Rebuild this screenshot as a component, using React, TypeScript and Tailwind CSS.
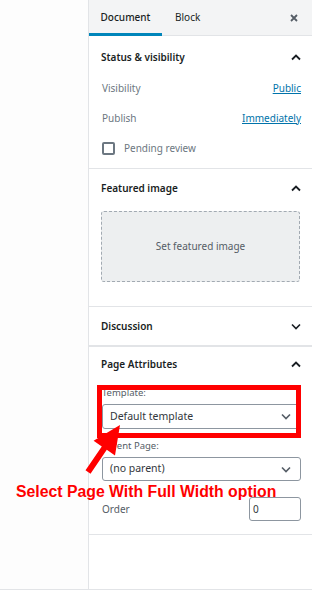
import { ReactNode } from 'react';

function ChevronUp() {
  return (
    <svg width="10" height="7" viewBox="0 0 10 7" className="text-[#191e23]">
      <path d="M1 5.5 L5 1.5 L9 5.5" fill="none" stroke="currentColor" strokeWidth="1.8" />
    </svg>
  );
}

function ChevronDown({ className = 'text-[#191e23]' }: { className?: string }) {
  return (
    <svg width="10" height="7" viewBox="0 0 10 7" className={className}>
      <path d="M1 1.5 L5 5.5 L9 1.5" fill="none" stroke="currentColor" strokeWidth="1.6" />
    </svg>
  );
}

function PanelHeader({ title, open = true, className = 'h-[38px]' }: { title: string; open?: boolean; className?: string }) {
  return (
    <div className={`flex items-center justify-between pl-[12px] pr-[11px] ${className}`}>
      <span className="text-[10px] font-semibold text-[#191e23]">{title}</span>
      {open ? <ChevronUp /> : <ChevronDown />}
    </div>
  );
}

function Select({ value, className }: { value: string; className: string }) {
  return (
    <div className={`flex items-center justify-between rounded-[3px] border border-[#8d96a0] pl-[7px] pr-[9px] ${className}`}>
      <span className="text-[10.5px] text-[#32373c]">{value}</span>
      <ChevronDown className="text-[#555d66]" />
    </div>
  );
}

function Row({ label, children }: { label: string; children: ReactNode }) {
  return (
    <div className="flex h-[20px] items-center justify-between">
      <span className="text-[10px] text-[#6c7781]">{label}</span>
      {children}
    </div>
  );
}

export default function App() {
  return (
    <div className="relative h-[598px] w-[312px] overflow-hidden bg-white font-['Noto_Sans',sans-serif]">
      <div className="flex h-[590px] border-b border-[#e2e4e7]">
        {/* editor canvas */}
        <div className="w-[89px] border-r border-[#e2e4e7] bg-[#fdfdfd]" />

        {/* sidebar */}
        <div className="relative flex flex-1 flex-col">
          <div className="flex h-[36px] items-center border-b border-[#e2e4e7] bg-[#f3f4f5]">
            <div className="relative flex h-full w-[73px] items-center justify-center">
              <span className="text-[10px] font-medium text-[#191e23]">Document</span>
              <div className="absolute bottom-[-1px] left-0 h-[3px] w-full bg-[#0085ba]" />
            </div>
            <span className="ml-[13px] text-[10px] text-[#191e23]">Block</span>
            <svg width="8" height="8" viewBox="0 0 8 8" className="ml-auto mr-[14px] text-[#555d66]">
              <path d="M1 1 L7 7 M7 1 L1 7" stroke="currentColor" strokeWidth="1.8" />
            </svg>
          </div>

          {/* Status & visibility */}
          <div className="border-b border-[#e2e4e7]">
            <PanelHeader title="Status & visibility" className="h-[42px]" />
            <div className="flex flex-col gap-[10px] pb-[10px] pl-[13px] pr-[11px]">
              <Row label="Visibility">
                <span className="text-[10px] text-[#0073aa] underline">Public</span>
              </Row>
              <Row label="Publish">
                <span className="text-[10px] text-[#0073aa] underline">Immediately</span>
              </Row>
              <div className="flex h-[20px] items-center gap-[9px]">
                <div className="h-[13px] w-[13px] rounded-[2px] border-2 border-[#6c7781]" />
                <span className="text-[10px] text-[#6c7781]">Pending review</span>
              </div>
            </div>
          </div>

          {/* Featured image */}
          <div className="border-b border-[#e2e4e7]">
            <PanelHeader title="Featured image" />
            <div className="px-[12px] pb-[24px] pt-[4px]">
              <div className="flex h-[71px] items-center justify-center rounded-[3px] border border-dashed border-[#a2aab2] bg-[#edeff0]">
                <span className="text-[10px] text-[#555d66]">Set featured image</span>
              </div>
            </div>
          </div>

          {/* Discussion */}
          <div className="border-b-2 border-[#e2e4e7]">
            <PanelHeader title="Discussion" open={false} />
          </div>

          {/* Page Attributes */}
          <div className="border-b border-[#e2e4e7] pb-[13px]">
            <PanelHeader title="Page Attributes" className="h-[35px]" />
            <div className="flex flex-col pl-[13px] pr-[11px]">
              <span className="mt-[4px] text-[9.5px] leading-[14px] text-[#555d66]">Template:</span>
              <Select value="Default template" className="mt-[4px] h-[25px]" />
              <span className="mt-[10px] text-[9.5px] leading-[14px] text-[#555d66]">Parent Page:</span>
              <Select value="(no parent)" className="mt-[4px] h-[24px]" />
              <div className="mt-[16px] flex items-center justify-between">
                <span className="text-[10px] text-[#555d66]">Order</span>
                <div className="flex h-[24px] w-[52px] items-center rounded-[3px] border border-[#8d96a0] pl-[3px]">
                  <span className="text-[10px] text-[#32373c]">0</span>
                </div>
              </div>
            </div>
          </div>

          {/* annotation box */}
          <div className="absolute left-[8px] top-[385px] h-[53px] w-[204px] border-[5px] border-[#ff0000]" />
        </div>
      </div>

      {/* annotation arrow and caption */}
      <svg className="pointer-events-none absolute left-0 top-0" width="312" height="598">
        <polygon
          points="85.5,470.3 101.8,446.4 93.6,440.8 120,425 115,455.4 106.8,449.8 90.5,473.7"
          fill="#ff0000"
        />
      </svg>
      <div className="absolute left-[16px] top-[484px] font-['Liberation_Sans',sans-serif] text-[15.8px] font-bold leading-none text-[#ff0000]">
        Select Page With Full Width option
      </div>
    </div>
  );
}
